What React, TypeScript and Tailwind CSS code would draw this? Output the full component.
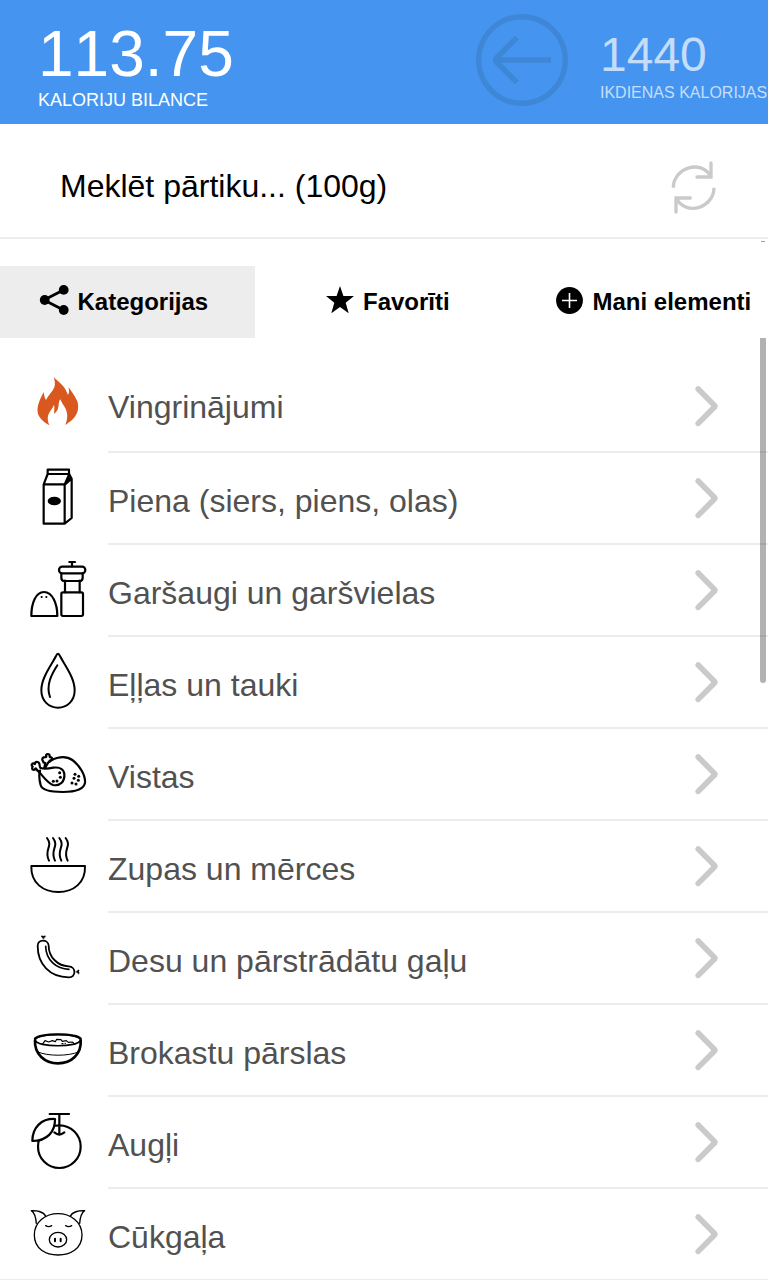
import type { ReactNode } from "react";

type Category = { label: string; viewBox: string; icon: ReactNode };

const categories: Category[] = [
  {
    label: "Vingrinājumi",
    viewBox: "0 3 324 276",
    icon: (
      <path
        fill="#d9581f"
        stroke="none"
        d="M162 50C166 58 182 68 191 80C199 91 202 100 204 105C208 98 208 90 205 81C213 92 225 107 232 124C239 147 231 166 218 178C211 185 203 190 196 195C201 181 204 168 200 155C197 142 187 133 181 118C174 125 178 140 172 151L163 162C161 153 165 143 162 134C158 145 148 154 144 167C142 177 144 187 148 196C131 186 116 175 113 157C110 137 121 116 131 96C132 104 133 112 138 120C144 107 158 95 163 82C167 71 163 60 162 50Z"
      />
    ),
  },
  {
    label: "Piena (siers, piens, olas)",
    viewBox: "0 279 324 276",
    icon: (
      <g strokeWidth="6.6">
        <path d="M131 373H194V491H131ZM131 373L143 342H208L194 373M143 342V329H207V342M207 341L215 356V474L194 491M197 372L214 356M208 344L202 361L213 355" />
        <ellipse cx="163" cy="423" rx="20" ry="13" fill="#000" stroke="none" />
      </g>
    ),
  },
  {
    label: "Garšaugi un garšvielas",
    viewBox: "0 15 324 276",
    icon: (
      <g strokeWidth="6.6">
        <path d="M94 228H172C172 190 157 156 132 156S94 190 94 228Z" />
        <rect x="184" y="157" width="65" height="71" rx="5" />
        <path d="M195 122V157M239 122V157M184 101V113Q184 123 194 123H238Q248 123 248 113V101M216 79V67M208 66H225" />
        <rect x="177" y="80" width="79" height="20" rx="10" />
        <g fill="#000" stroke="none">
          <circle cx="125" cy="171" r="3.3" />
          <circle cx="139" cy="171" r="3.3" />
        </g>
      </g>
    ),
  },
  {
    label: "Eļļas un tauki",
    viewBox: "0 291 324 276",
    icon: (
      <g strokeWidth="6">
        <path d="M174 341Q171 341 168 348C154 376 124 413 124 451C124 482 146 503 174 503S224 482 224 451C224 413 194 376 180 348Q177 341 174 341Z" />
        <path d="M172 376C155 403 137 435 150 471" />
      </g>
    ),
  },
  {
    label: "Vistas",
    viewBox: "0 -18 324 276",
    icon: (
      <g strokeWidth="6.6">
        <path d="M120 107C116 121 118 136 122 151C126 166 151 171 188 171C228 171 252 164 255 143C257 119 237 90 217 75C196 60 165 66 145 82L135 99" />
        <path d="M113 107C127 120 140 143 159 150C181 154 195 139 193 117C191 102 177 96 160 98C145 101 132 102 122 99" />
        <path d="M113 107L107 100C102 109 93 103 98 95C91 90 97 82 105 87C105 79 116 79 118 86C120 90 117 94 122 99" />
        <path d="M131 83C130 78 124 75 128 69C132 64 138 68 139 65C136 58 143 55 148 59C151 63 146 67 153 67C160 69 154 77 149 77L148 81M131 83L136 84L133 98" />
        <g fill="#000" stroke="none">
          <circle cx="179" cy="113" r="4.5" />
          <circle cx="181" cy="127" r="4.5" />
          <circle cx="171" cy="138" r="4.5" />
          <circle cx="160" cy="139" r="4.5" />
          <circle cx="225" cy="118" r="4.5" />
          <circle cx="236" cy="124" r="4.5" />
          <circle cx="222" cy="130" r="4.5" />
          <circle cx="235" cy="136" r="4.5" />
          <circle cx="216" cy="144" r="4.5" />
          <circle cx="228" cy="147" r="4.5" />
        </g>
      </g>
    ),
  },
  {
    label: "Zupas un mērces",
    viewBox: "0 258 324 276",
    icon: (
      <g strokeWidth="6">
        <path d="M94 393H255C257 444 220 471 175 471S92 444 94 393Z" strokeWidth="5.8" />
        <path d="M141 309C161 336 130 342 147 377M159 309C179 336 148 342 165 377M178 309C198 336 167 342 184 377M197 309C217 336 186 342 203 377" />
      </g>
    ),
  },
  {
    label: "Desu un pārstrādātu gaļu",
    viewBox: "0 -21 324 276",
    icon: (
      <g strokeWidth="5.4">
        <path d="M113 78C112 56 145 57 146 77C146 112 174 138 206 139C229 140 229 173 206 172C149 172 113 132 113 78Z" />
        <path d="M137 79C138 121 169 147 207 148" strokeWidth="5" />
        <path d="M130 57L123 48Q127 46 130 49Q133 46 137 48ZM228 155L236 149Q239 152 236 155Q239 158 237 162Z" fill="#000" strokeWidth="1" />
      </g>
    ),
  },
  {
    label: "Brokastu pārslas",
    viewBox: "0 255 324 276",
    icon: (
      <g strokeWidth="8">
        <path d="M105 360C110 338 238 338 242 360C237 383 110 383 105 360Z" strokeWidth="5" />
        <path d="M105 356C123 339 226 339 242 356" strokeWidth="7" />
        <path d="M105 361C103 402 134 430 174 430S245 402 242 361" />
        <path d="M114 396C143 409 205 409 235 396" strokeWidth="3" />
        <path d="M127 373L135 362L146 366L157 362L166 365L170 358L183 359L187 364L199 362L205 367L217 366L225 373" strokeWidth="3.5" />
        <path d="M186 371H189M195 370H196" strokeWidth="3.5" />
      </g>
    ),
  },
  {
    label: "Augļi",
    viewBox: "0 -9 324 276",
    icon: (
      <g strokeWidth="6.6">
        <circle cx="178" cy="140" r="64" />
        <path d="M97 123C97 82 125 55 165 57C166 94 142 123 97 123Z" fill="#fff" />
        <path d="M178 43V103M149 42H207M163 97Q171 103 178 104Q185 103 193 97" />
      </g>
    ),
  },
  {
    label: "Cūkgaļa",
    viewBox: "0 267 324 276",
    icon: (
      <g strokeWidth="4">
        <path d="M174 341C138 341 103 364 103 405C103 447 138 465 174 465S246 447 246 405C246 364 210 341 174 341Z" />
        <path d="M109 370C108 357 103 338 94 332C112 331 132 336 137 349M239 370C240 357 245 338 254 332C236 331 216 336 211 349" />
        <ellipse cx="174" cy="419" rx="26" ry="22" />
        <path d="M137 377Q146 383 155 377M197 377Q206 383 215 377" />
        <path d="M165 416V424M182 416V424" strokeWidth="6" />
      </g>
    ),
  },
];

function Header() {
  return (
    <header className="flex h-[124px] shrink-0 bg-[#4595f0] text-white [font-kerning:none]">
      <div className="w-[476px] pl-[38px] pt-[21px]">
        <div className="text-[64px] leading-[66px]">113.75</div>
        <div className="text-[18px] leading-[27px]">KALORIJU BILANCE</div>
      </div>
      <svg className="mt-[14px] h-[92px] w-[92px]" viewBox="0 0 92 92" fill="none" stroke="#3e87d6">
        <circle cx="46" cy="46" r="43.3" strokeWidth="5.4" />
        <path d="M41 23.5L21 43.5Q18.7 46 21 48.5L41 68.5M20 46H75" strokeWidth="5.6" />
      </svg>
      <div className="ml-8 whitespace-nowrap pt-[30px] text-white/70">
        <div className="text-[48px] leading-[50px]">1440</div>
        <div className="text-[16px] leading-[26px]">IKDIENAS KALORIJAS</div>
      </div>
    </header>
  );
}

function SearchBar() {
  return (
    <div className="flex h-[115px] shrink-0 items-center justify-between border-b-2 border-[#ececec] pl-[60px] pr-[49px]">
      <span className="pt-[10px] text-[32px] leading-10 text-black">Meklēt pārtiku... (100g)</span>
      <svg className="mt-[14px] h-[54px] w-[48px]" viewBox="94 61 144 162" fill="none" stroke="#cacaca" strokeWidth="10">
        <path d="M101 141C101 83 182 53 214 108M223 141C223 199 142 229 110 174" />
        <path d="M214 67V109H172M109 214V172H152" strokeLinecap="round" />
      </svg>
    </div>
  );
}

function Tabs() {
  return (
    <nav className="flex h-[72px] shrink-0 text-[24px] font-bold leading-[72px] text-black">
      <div className="flex w-[255px] items-center bg-[#ededed] pl-[39px]">
        <svg className="mr-[8.5px] h-[30px] w-[30px] -translate-y-[2px]" viewBox="0 0 30 30">
          <path d="M24.5 5L5 15L24.5 25" fill="none" stroke="#000" strokeWidth="2.8" />
          <circle cx="24.7" cy="4.9" r="4.9" />
          <circle cx="5.7" cy="15" r="4.9" />
          <circle cx="24.7" cy="25" r="4.9" />
        </svg>
        Kategorijas
      </div>
      <div className="flex w-[256px] items-center pl-[71px]">
        <svg className="mr-[9px] h-7 w-7 -translate-y-[2px]" viewBox="0 0 28 28">
          <path d="M14 0L17.4 10.1H28L19.7 16.7L22.7 27.3L14 21.1L5.3 27.3L8.3 16.7L0 10.1H10.6Z" />
        </svg>
        Favorīti
      </div>
      <div className="flex w-[257px] items-center whitespace-nowrap pl-[45px]">
        <svg className="mr-[9.5px] h-[27px] w-[27px] shrink-0 -translate-y-[2px]" viewBox="0 0 27 27">
          <circle cx="13.5" cy="13.5" r="13.4" />
          <path d="M13.5 6V21M6 13.5H21" stroke="#fff" strokeWidth="1.6" />
        </svg>
        Mani elementi
      </div>
    </nav>
  );
}

function CategoryRow({ item, first, last }: { item: Category; first: boolean; last: boolean }) {
  return (
    <li className={last ? "flex h-[92px] shrink-0 border-b-2 border-[#ececec]" : "flex h-[92px] shrink-0"}>
      <svg
        className="h-[92px] w-[108px] shrink-0"
        viewBox={item.viewBox}
        fill="none"
        stroke="#000"
        strokeLinecap="round"
        strokeLinejoin="round"
      >
        {item.icon}
      </svg>
      <div
        className={
          last
            ? "flex flex-1 items-center justify-between pr-12"
            : "flex flex-1 items-center justify-between border-b-2 border-[#ececec] pr-12"
        }
      >
        <span className={first ? "pt-px text-[32px] leading-10" : "pt-[5px] text-[32px] leading-10"}>{item.label}</span>
        <svg className="h-[42px] w-[26px]" viewBox="0 0 26 42" fill="none" stroke="#cacaca" strokeWidth="5.6">
          <path d="M4.2 4L21.2 21.2L4.2 38.4" strokeLinecap="round" strokeLinejoin="bevel" />
          <path d="M19 19L21.2 21.2L19 23.4" strokeLinejoin="round" strokeWidth="5" />
        </svg>
      </div>
    </li>
  );
}

export default function App() {
  return (
    <div className="relative flex h-[1280px] w-[768px] flex-col overflow-hidden bg-white font-['Liberation_Sans',Arial,sans-serif]">
      <Header />
      <SearchBar />
      <div className="flex h-[27px] shrink-0 justify-end pr-[3px] pt-[2px]">
        <div className="h-px w-1 bg-[#a5a5a5]" />
      </div>
      <Tabs />
      <ul className="flex flex-col pt-[23px] text-[#515151]">
        {categories.map((item, i) => (
          <CategoryRow key={item.label} item={item} first={i === 0} last={i === categories.length - 1} />
        ))}
      </ul>
      <div className="absolute right-[2px] top-[338px] h-[345px] w-[6px] rounded-b-full bg-black/30" />
    </div>
  );
}
